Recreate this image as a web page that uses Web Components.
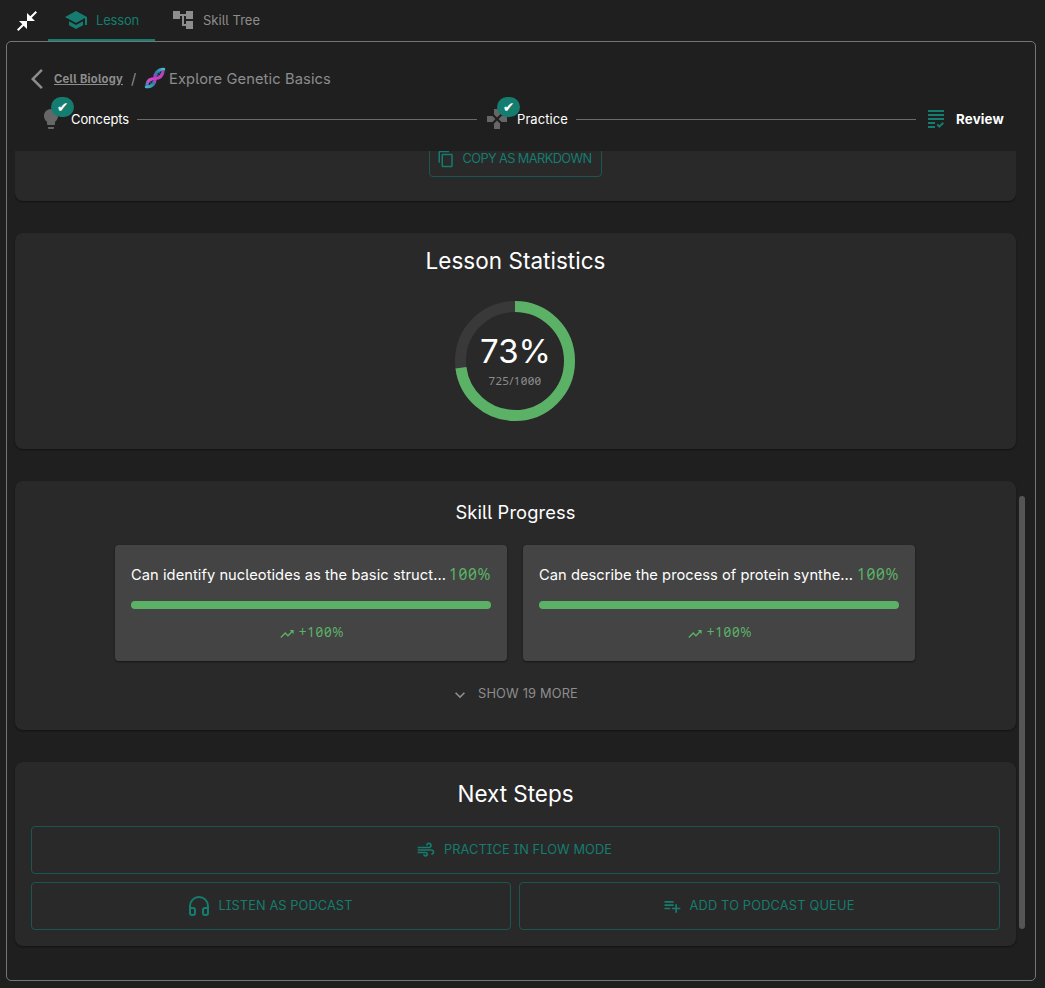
<!DOCTYPE html>
<html lang="en">
<head>
<meta charset="utf-8">
<title>Explore Genetic Basics</title>
<style>
:root{--bg:#1f1f1f;--card:#292929;--teal:#147d6f;--tealline:#1b564f;--green:#5bb266;--muted:#8d8d8d}
html,body{margin:0;height:988px;overflow:hidden;background:var(--bg);color:#fff;font-family:Inter,"Noto Sans",sans-serif;font-feature-settings:"zero","cv05","cv08"}
</style>
</head>
<body>
<lesson-app></lesson-app>
<script>
const ICONS={
 shrink:'<path d="M22 3.41 16.71 8.7 20 12h-8V4l3.29 3.29L20.59 2 22 3.41zM3.41 22l5.29-5.29L12 20v-8H4l3.29 3.29L2 20.59 3.41 22z"/>',
 school:'<path d="M5 13.18v4L12 21l7-3.82v-4L12 17l-7-3.82zM12 3 1 9l11 6 9-4.91V17h2V9L12 3z"/>',
 tree:'<path d="M22 11V3h-7v3H9V3H2v8h7V8h2v10h4v3h7v-8h-7v3h-2V8h2v3z"/>',
 back:'<path d="M17.77 3.77 16 2 6 12l10 10 1.77-1.77L9.54 12z"/>',
 bulb:'<path d="M9 21c0 .55.45 1 1 1h4c.55 0 1-.45 1-1v-1H9v1zm3-19C8.14 2 5 5.14 5 9c0 2.38 1.19 4.47 3 5.74V17c0 .55.45 1 1 1h6c.55 0 1-.45 1-1v-2.26c1.81-1.27 3-3.36 3-5.74 0-3.86-3.14-7-7-7z"/>',
 games:'<path d="M15 7.5V2H9v5.5l3 3 3-3zM7.5 9H2v6h5.5l3-3-3-3zM9 16.5V22h6v-5.5l-3-3-3 3zM16.5 9l-3 3 3 3H22V9h-5.5z"/>',
 grading:'<path d="M4 7h16v2H4zm0-4h16v2H4zm0 8h16v2H4zm0 4h7v2H4zm0 4h7v2H4zm11.41-.83L14 16.75l-1.41 1.41L15.41 21 20 16.42 18.58 15z"/>',
 copy:'<path d="M16 1H4c-1.1 0-2 .9-2 2v14h2V3h12V1zm3 4H8c-1.1 0-2 .9-2 2v14c0 1.1.9 2 2 2h11c1.1 0 2-.9 2-2V7c0-1.1-.9-2-2-2zm0 16H8V7h11v14z"/>',
 trend:'<path d="m16 6 2.29 2.29-4.88 4.88-4-4L2 16.59 3.41 18l6-6 4 4 6.3-6.29L22 12V6z"/>',
 more:'<path d="M16.59 8.59 12 13.17 7.41 8.59 6 10l6 6 6-6z"/>',
 air:'<path d="M14.5 17c0 1.65-1.35 3-3 3s-3-1.35-3-3h2c0 .55.45 1 1 1s1-.45 1-1-.45-1-1-1H2v-2h9.5c1.65 0 3 1.35 3 3zM19 6.5C19 4.57 17.43 3 15.5 3S12 4.57 12 6.5h2c0-.83.67-1.5 1.5-1.5s1.5.67 1.5 1.5S16.33 8 15.5 8H2v2h13.5c1.93 0 3.5-1.57 3.5-3.5zm-.5 4.5H2v2h16.5c.83 0 1.5.67 1.5 1.5s-.67 1.5-1.5 1.5v2c1.93 0 3.5-1.57 3.5-3.5S20.43 11 18.5 11z"/>',
 phones:'<path fill="none" stroke="currentColor" stroke-width="2" d="M3 14h3a2 2 0 0 1 2 2v3a2 2 0 0 1-2 2H5a2 2 0 0 1-2-2v-7a9 9 0 0 1 18 0v7a2 2 0 0 1-2 2h-1a2 2 0 0 1-2-2v-3a2 2 0 0 1 2-2h3"/>',
 queue:'<path d="M14 10H3v2h11v-2zm0-4H3v2h11V6zm4 8v-4h-2v4h-4v2h4v4h2v-4h4v-2h-4zM3 16h7v-2H3v2z"/>',
 dna:'<defs><linearGradient id="a" x1="2" y1="21" x2="22" y2="3" gradientUnits="userSpaceOnUse"><stop offset="0" stop-color="#3fb4cc"/><stop offset=".3" stop-color="#2f86a8"/><stop offset=".42" stop-color="#b03fc0"/><stop offset=".55" stop-color="#a042c6"/><stop offset=".7" stop-color="#2b7fa3"/><stop offset="1" stop-color="#43bcd4"/></linearGradient><linearGradient id="b" x1="2" y1="21" x2="22" y2="3" gradientUnits="userSpaceOnUse"><stop offset="0" stop-color="#2c8fae"/><stop offset=".25" stop-color="#d848cc"/><stop offset=".5" stop-color="#c63fc0"/><stop offset=".8" stop-color="#c53fbd"/><stop offset="1" stop-color="#8e4fb0"/></linearGradient></defs><g fill="none" stroke-linecap="round"><path stroke="#2c5f80" stroke-width="1.400" d="M5 15l4.500 4.500M7 13.500l4.200 4.200M13 6.500l5 5M15.500 5l4 4"/><path stroke="url(#a)" stroke-width="3.400" d="M2.500 21.500C9.500 21.500 12.500 17.500 12 12.500S14 3 21.500 2.500"/><path stroke="url(#b)" stroke-width="3.400" d="M3.200 19C4 13.500 8 12.500 12 12.500S20 10.500 20.800 5"/></g>'
};
const define=(name,markup,init)=>{
 const t=document.createElement('template');
 customElements.define(name,class extends HTMLElement{
  connectedCallback(){
   if(this.shadowRoot)return;
   t.innerHTML=typeof markup==='function'?markup(this):markup;
   this.attachShadow({mode:'open'}).append(t.content.cloneNode(true));
   if(init)init(this);
  }
 });
};
const at=(e,n,d)=>e.getAttribute(n)??d;

define('ui-icon',e=>`<style>:host{display:block;flex:none;width:${at(e,'size',24)}px;height:${at(e,'size',24)}px}svg{display:block;width:100%;height:100%;fill:currentColor}</style><svg viewBox="0 0 24 24">${ICONS[at(e,'name')]}</svg>`);

/* A one-line label whose tracking is adjusted to fill a given measure. */
define('ui-label',e=>`<style>:host{display:block;flex:none;white-space:nowrap;font-size:${at(e,'size',13)}px;line-height:${at(e,'line',20)}px;width:${at(e,'measure')}px}:host([digits]){font-family:"Noto Sans",sans-serif;font-feature-settings:"zero"}span{display:inline-block}:host([underlined]) span{text-decoration:underline}</style><span><slot></slot></span>`,
 e=>{const s=e.shadowRoot.querySelector('span');const w=s.getBoundingClientRect().width,n=e.textContent.length;
  s.style.letterSpacing=((+at(e,'measure')-w)/n).toFixed(4)+'px';});

define('ui-tab',e=>`<style>:host{display:flex;box-sizing:border-box;height:41px;align-items:center;gap:8px;color:var(--muted);padding:0 16px 1px;border-bottom:2px solid transparent}:host([active]){color:var(--teal);border-color:var(--teal)}::slotted(*){position:relative;top:1px}</style><slot></slot>`);

define('step-mark',`<style>:host{display:flex;align-items:center;position:relative;height:24px;flex:none}
.ic{color:#666}:host([current]) .ic{color:var(--teal)}
.b{position:absolute;left:12px;top:-10px;width:23px;height:20px;border-radius:10px;background:var(--teal);display:flex;align-items:center;justify-content:center;font:14px/20px "DejaVu Sans",sans-serif}
:host([current]) .b{display:none}::slotted(ui-label){margin-left:8px}</style>
<div class="ic"><slot name="icon"></slot></div><span class="b">✔</span><slot></slot>`);

define('ui-card',`<style>:host{display:flex;flex-direction:column;align-items:center;box-sizing:border-box;background:var(--card);border-radius:8px;box-shadow:0 1px 2px rgba(0,0,0,.45);flex:none}</style><slot></slot>`);

define('ui-button',`<style>:host{display:flex;box-sizing:border-box;align-items:center;justify-content:center;border:1px solid var(--tealline);border-radius:4px;color:var(--teal);gap:8px}::slotted(ui-label){margin-bottom:1px}</style><slot></slot>`);

define('score-ring',`<style>:host{display:grid;width:120px;height:120px}svg,div{grid-area:1/1}circle{fill:none;stroke-width:11}
div{display:flex;flex-direction:column;align-items:center}.s{color:var(--muted)}</style>
<svg viewBox="0 0 120 120"><circle cx="60" cy="60" r="54.500" stroke="#393939"/><circle cx="60" cy="60" r="54.500" stroke="#5bb266" pathLength="1000" stroke-dasharray="730 1000" transform="rotate(-90 60 60)"/></svg>
<div><ui-label style="margin:30px 0 0 1px" size="33" line="40" measure="71">73%</ui-label><ui-label class="s" digits size="11.500" line="20" measure="53">725/1000</ui-label></div>`);

define('skill-card',`<style>:host{display:block;box-sizing:border-box;width:392px;height:116px;padding:20px 16px 0;background:#444;border-radius:4px;box-shadow:0 1px 2px rgba(0,0,0,.5)}
.r{display:flex;height:20px}.g,.d{color:var(--green)}.r .g{margin:-1px 0 0 auto}.bar{height:8px;border-radius:4px;background:var(--green);margin-top:16px}
.d{display:flex;justify-content:center;align-items:center;gap:4px;margin:13px 0 0 1px;height:20px}.d ui-icon{margin-top:4px}</style>
<div class="r"><slot></slot><ui-label class="g" digits size="15.500" measure="42">100%</ui-label></div><div class="bar"></div>
<div class="d"><ui-icon name="trend" size="16"></ui-icon><ui-label digits size="13.500" measure="45.500">+100%</ui-label></div>`);

define('lesson-app',`<style>
:host{display:flex;flex-direction:column;width:1045px;height:988px}
.tabs{display:flex;height:41px;padding-left:15px;flex:none}
.tabs>ui-icon{margin:9px 9px 0 0}
.panel{box-sizing:border-box;margin-left:6px;width:1030px;height:940px;border:1px solid #757575;border-radius:5px;display:flex;flex-direction:column}
.crumb{display:flex;align-items:center;height:24px;margin:25px 0 0 18px;color:var(--muted)}
.cell{font-weight:700;margin:-1px 0 0 5px}
.steps{display:flex;align-items:center;margin:16px 0 0 32px;height:24px}
.line{height:1px;background:#6b6b6b}
.body{display:flex;height:829px;margin-top:20px}
.scroll{width:1001px;margin-left:8px;display:flex;flex-direction:column;gap:32px;height:829px}
.thumb{width:6px;height:433px;border-radius:3px;background:#555;margin:345px 0 0 3px}
.c1{height:50px;border-radius:0 0 8px 8px}.c1 ui-button{width:173px;height:36px;margin-top:-10px}
.clip{height:52px;overflow:hidden;margin-bottom:-2px;flex:none}
.c2{height:216px}.c2 score-ring{margin:24px 1px 0 0}.c3{height:249px}.c4{height:184px}
.row{display:flex;gap:16px;margin:21px 1px 0 0}
.show{display:flex;align-items:center;gap:8px;color:var(--muted);margin:23px 3px 0 0}.show ui-label{margin-bottom:1px}
.btns{display:grid;grid-template-columns:480px 481px;gap:8px;margin-top:16px}.btns ui-button{height:48px}.wide{grid-column:1/3}
.btns ui-label,.c1 ui-label{margin-right:3px}
</style>
<div class="tabs"><ui-icon name="shrink"></ui-icon>
<ui-tab active><ui-icon name="school"></ui-icon><ui-label size="13" measure="43">Lesson</ui-label></ui-tab>
<ui-tab><ui-icon name="tree"></ui-icon><ui-label size="13" measure="57">Skill Tree</ui-label></ui-tab></div>
<div class="panel">
<div class="crumb"><ui-icon name="back"></ui-icon><ui-label class="cell" underlined size="11.200" measure="69">Cell Biology</ui-label>
<ui-label style="margin-left:8px" size="14.500" measure="6">/</ui-label><ui-icon style="margin:-2px 0 0 7px" name="dna" size="22"></ui-icon><ui-label style="margin-left:3px" size="14.700" measure="162">Explore Genetic Basics</ui-label></div>
<div class="steps"><step-mark><ui-icon slot="icon" name="bulb"></ui-icon><ui-label size="13" measure="58">Concepts</ui-label></step-mark>
<div class="line" style="width:340px;margin:0 8px"></div>
<step-mark><ui-icon slot="icon" name="games"></ui-icon><ui-label size="13" measure="51">Practice</ui-label></step-mark>
<div class="line" style="width:340px;margin:0 8px"></div>
<step-mark current><ui-icon slot="icon" name="grading"></ui-icon><ui-label style="font-weight:700" size="13.300" measure="48">Review</ui-label></step-mark></div>
<div class="body"><div class="scroll">
<div class="clip"><ui-card class="c1"><ui-button><ui-icon name="copy" size="18"></ui-icon><ui-label size="12.800" measure="129">COPY AS MARKDOWN</ui-label></ui-button></ui-card></div>
<ui-card class="c2"><ui-label style="margin-top:12px" size="22.500" line="32" measure="180">Lesson Statistics</ui-label><score-ring></score-ring></ui-card>
<ui-card class="c3"><ui-label style="margin-top:19px" size="18.300" line="24" measure="120">Skill Progress</ui-label>
<div class="row"><skill-card><ui-label size="14.700" measure="315">Can identify nucleotides as the basic struct...</ui-label></skill-card><skill-card><ui-label size="14.700" measure="314">Can describe the process of protein synthe...</ui-label></skill-card></div>
<div class="show"><ui-icon name="more" size="20"></ui-icon><ui-label size="12.800" measure="100">SHOW 19 MORE</ui-label></div></ui-card>
<ui-card class="c4"><ui-label style="margin-top:16px" size="22.500" line="32" measure="116">Next Steps</ui-label>
<div class="btns"><ui-button class="wide"><ui-icon name="air" size="20"></ui-icon><ui-label size="12.800" measure="168">PRACTICE IN FLOW MODE</ui-label></ui-button>
<ui-button><ui-icon name="phones"></ui-icon><ui-label size="12.800" measure="134">LISTEN AS PODCAST</ui-label></ui-button>
<ui-button><ui-icon name="queue" size="20"></ui-icon><ui-label size="12.800" measure="165">ADD TO PODCAST QUEUE</ui-label></ui-button></div></ui-card>
</div><div class="thumb"></div></div>
</div>`);
</script>
</body>
</html>
